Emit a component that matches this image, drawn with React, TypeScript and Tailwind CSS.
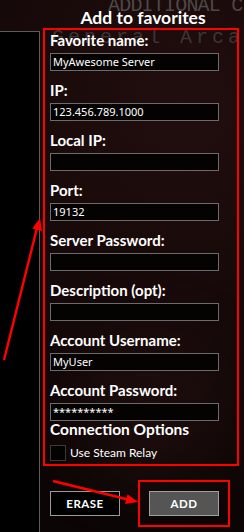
const fields = [
  { label: "Favorite name:", value: "MyAwesome Server" },
  { label: "IP:", value: "123.456.789.1000" },
  { label: "Local IP:", value: "" },
  { label: "Port:", value: "19132" },
  { label: "Server Password:", value: "" },
  { label: "Description (opt):", value: "" },
  { label: "Account Username:", value: "MyUser" },
  { label: "Account Password:", value: "**********" },
];

function Field({ label, value, last }: { label: string; value: string; last?: boolean }) {
  return (
    <div className={last ? "" : "mb-[11px]"}>
      <div className="text-[15px] leading-[17px] font-bold">{label}</div>
      <div className="mt-[4px] h-[18px] w-[169px] border border-[#6b6b6b] bg-[#050202] pl-[2px] font-['Noto_Sans',sans-serif] text-[11px] leading-[16px]">
        {value}
      </div>
    </div>
  );
}

export default function App() {
  return (
    <div className="relative h-[532px] w-[244px] overflow-hidden bg-[#100606] font-['Lato',sans-serif] text-white">
      {/* backdrop */}
      <div className="absolute inset-0 bg-[radial-gradient(circle_at_75%_20%,#220e0e_0%,#160909_45%,#0a0404_100%)]" />
      <div className="absolute left-[80px] top-[330px] h-[160px] w-[140px] rounded-full bg-[#2a1614] opacity-40 blur-[30px]" />

      {/* watermark behind the dialog */}
      <div className="absolute left-[108px] top-[-6px] font-['Liberation_Mono',monospace] text-[20px] leading-[24px] tracking-[-0.8px] text-[#4d4848] whitespace-nowrap">
        ADDITIONAL C
      </div>
      <div className="absolute left-[52px] top-[26px] font-['Liberation_Mono',monospace] text-[20px] leading-[24px] tracking-[4px] text-[#3d3434] whitespace-nowrap">
        General Arca
      </div>

      <div className="relative flex h-full">
        <aside className="mt-[31px] w-[40px] border-t border-r border-[#5c5c5c] bg-black" />

        <main className="ml-[3px] flex w-[196px] flex-col">
          <h1 className="h-[28px] pt-[8px] pl-[4px] text-center text-[17.5px] leading-[20px] font-bold whitespace-nowrap">
            Add to favorites
          </h1>

          <section className="border-2 border-[#ff0000] pt-[2px] pb-[3px] pl-[5px]">
            {fields.map((f, i) => (
              <Field key={f.label} label={f.label} value={f.value} last={i === fields.length - 1} />
            ))}
            <div className="text-[15.5px] leading-[17px] font-bold">Connection Options</div>
            <div className="mt-[7px] flex items-center gap-[4px]">
              <div className="h-[16px] w-[16px] border border-[#3a3a3a] bg-[#050202]" />
              <span className="text-[12px] leading-[16px]">Use Steam Relay</span>
            </div>
          </section>

          <div className="mt-[14px] flex items-center">
            <button className="ml-[7px] h-[25px] w-[70px] border border-[#9a9a9a] bg-black text-[11.5px] font-bold tracking-[0.5px]">
              ERASE
            </button>
            <div className="ml-[18px] border-2 border-[#ff0000] p-[9px]">
              <button className="block h-[25px] w-[70px] border border-[#a0a0a0] bg-[#555555] text-[11.5px] font-bold tracking-[0.5px]">
                ADD
              </button>
            </div>
          </div>
        </main>
      </div>

      {/* annotation arrows */}
      <svg className="pointer-events-none absolute inset-0" width="244" height="532" viewBox="0 0 244 532">
        <line x1="4" y1="360" x2="37" y2="228" stroke="#ff0000" strokeWidth="2.5" />
        <polygon points="40,218 42,231 32.3,228.4" fill="#ff0000" />
        <line x1="53" y1="481" x2="128" y2="499.5" stroke="#ff0000" strokeWidth="2.5" />
        <polygon points="138,502 125.1,504 127.5,494.3" fill="#ff0000" />
      </svg>
    </div>
  );
}
